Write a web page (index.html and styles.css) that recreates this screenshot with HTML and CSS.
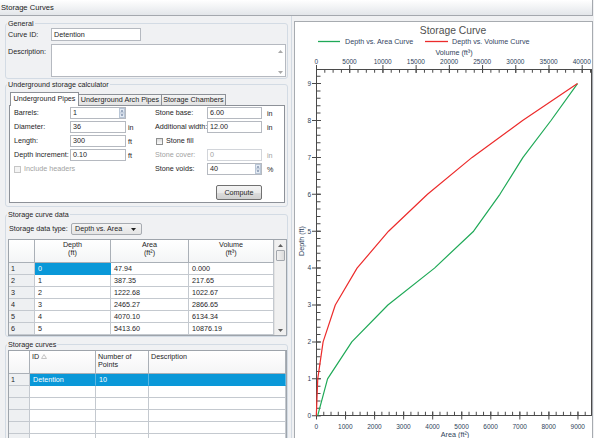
FILE: index.html
```html
<!DOCTYPE html>
<html lang="en">
<head>
<meta charset="utf-8">
<title>Storage Curves</title>
<link rel="stylesheet" href="styles.css">
</head>
<body>
<div class="titlebar">Storage Curves</div>
<div class="main">
  <div class="left">
    <fieldset class="group general">
      <legend>General</legend>
      <div class="frow">
        <span class="flabel">Curve ID:</span>
        <div class="inp curve-id">Detention</div>
      </div>
      <div class="frow desc">
        <span class="flabel">Description:</span>
        <div class="textarea">
          <div class="ta-scroll">
            <svg width="5" height="3" viewBox="0 0 5 3"><path d="M0 3L2.5 0L5 3Z" fill="#a9a9a9"/></svg>
            <svg width="5" height="3" viewBox="0 0 5 3"><path d="M0 0L2.5 3L5 0Z" fill="#a9a9a9"/></svg>
          </div>
        </div>
      </div>
    </fieldset>

    <fieldset class="group calc">
      <legend>Underground storage calculator</legend>
      <div class="tabs">
        <div class="tab active t1">Underground Pipes</div>
        <div class="tab t2">Underground Arch Pipes</div>
        <div class="tab t3">Storage Chambers</div>
      </div>
      <div class="tabpage">
        <div class="form">
          <span class="fl">Barrels:</span>
          <div class="inp spin"><span>1</span><svg class="sp" width="6" height="10" viewBox="0 0 6 10"><rect x="0.5" y="0.5" width="5" height="4.5" fill="#e4ebf4" stroke="#b9c6d6"/><rect x="0.5" y="5" width="5" height="4.5" fill="#e4ebf4" stroke="#b9c6d6"/><path d="M1.6 3.6L3 2L4.4 3.6Z" fill="#4f6688"/><path d="M1.6 6.4L3 8L4.4 6.4Z" fill="#4f6688"/></svg></div>
          <span></span>
          <span class="fl">Stone base:</span>
          <div class="inp">6.00</div>
          <span class="u2">in</span>

          <span class="fl">Diameter:</span>
          <div class="inp">36</div>
          <span class="u1">in</span>
          <span class="fl">Additional width:</span>
          <div class="inp">12.00</div>
          <span class="u2">in</span>

          <span class="fl">Length:</span>
          <div class="inp">300</div>
          <span class="u1">ft</span>
          <span class="chkline span2 right"><span class="chk"></span>Stone fill</span>
          <span></span>

          <span class="fl">Depth increment:</span>
          <div class="inp">0.10</div>
          <span class="u1">ft</span>
          <span class="fl dis">Stone cover:</span>
          <div class="inp disabled">0</div>
          <span class="u2 dis">in</span>

          <span class="chkline span3 dis"><span class="chk chk-dis"></span>Include headers</span>
          <span class="fl">Stone voids:</span>
          <div class="inp spin"><span>40</span><svg class="sp" width="6" height="10" viewBox="0 0 6 10"><rect x="0.5" y="0.5" width="5" height="4.5" fill="#e4ebf4" stroke="#b9c6d6"/><rect x="0.5" y="5" width="5" height="4.5" fill="#e4ebf4" stroke="#b9c6d6"/><path d="M1.6 3.6L3 2L4.4 3.6Z" fill="#4f6688"/><path d="M1.6 6.4L3 8L4.4 6.4Z" fill="#4f6688"/></svg></div>
          <span class="u2">%</span>
        </div>
        <div class="btn-row"><div class="btn">Compute</div></div>
      </div>
    </fieldset>

    <fieldset class="group data">
      <legend>Storage curve data</legend>
      <div class="combo-row">
        <span class="clabel">Storage data type:</span>
        <div class="combo"><span>Depth vs. Area</span><svg width="5" height="3" viewBox="0 0 5 3"><path d="M0 0L2.5 3L5 0Z" fill="#1e1e1e"/></svg></div>
      </div>
      <div class="datagrid">
        <div class="gtable">
          <div class="ghead dcols">
            <div class="cell rh"></div>
            <div class="cell hc">Depth<br>(ft)</div>
            <div class="cell hc">Area<br>(ft²)</div>
            <div class="cell hc">Volume<br>(ft³)</div>
          </div>
          <div class="grow dcols"><div class="cell rh">1</div><div class="cell sel">0</div><div class="cell">47.94</div><div class="cell">0.000</div></div>
          <div class="grow dcols"><div class="cell rh">2</div><div class="cell">1</div><div class="cell">387.35</div><div class="cell">217.65</div></div>
          <div class="grow dcols"><div class="cell rh">3</div><div class="cell">2</div><div class="cell">1222.68</div><div class="cell">1022.67</div></div>
          <div class="grow dcols"><div class="cell rh">4</div><div class="cell">3</div><div class="cell">2465.27</div><div class="cell">2866.65</div></div>
          <div class="grow dcols"><div class="cell rh">5</div><div class="cell">4</div><div class="cell">4070.10</div><div class="cell">6134.34</div></div>
          <div class="grow dcols"><div class="cell rh">6</div><div class="cell">5</div><div class="cell">5413.60</div><div class="cell">10876.19</div></div>
        </div>
        <div class="vbar">
          <div class="varr"><svg width="5" height="3" viewBox="0 0 5 3"><path d="M0 3L2.5 0L5 3Z" fill="#606060"/></svg></div>
          <div class="thumb"></div>
          <div class="vspace"></div>
          <div class="varr"><svg width="5" height="3" viewBox="0 0 5 3"><path d="M0 0L2.5 3L5 0Z" fill="#606060"/></svg></div>
        </div>
      </div>
    </fieldset>

    <fieldset class="group curves">
      <legend>Storage curves</legend>
      <div class="cgrid">
        <div class="ghead ccols">
          <div class="cell rh"></div>
          <div class="cell hl">ID <svg width="6" height="5" viewBox="0 0 6 5"><path d="M0.5 4.5L3 0.5L5.5 4.5Z" fill="none" stroke="#c4c4c4"/></svg></div>
          <div class="cell hl">Number of<br>Points</div>
          <div class="cell hl">Description</div>
        </div>
        <div class="grow ccols selrow"><div class="cell rh">1</div><div class="cell">Detention</div><div class="cell">10</div><div class="cell"></div></div>
        <div class="grow ccols"><div class="cell rh"></div><div class="cell"></div><div class="cell"></div><div class="cell"></div></div>
        <div class="grow ccols"><div class="cell rh"></div><div class="cell"></div><div class="cell"></div><div class="cell"></div></div>
        <div class="grow ccols"><div class="cell rh"></div><div class="cell"></div><div class="cell"></div><div class="cell"></div></div>
        <div class="grow ccols"><div class="cell rh"></div><div class="cell"></div><div class="cell"></div><div class="cell"></div></div>
        <div class="grow ccols"><div class="cell rh"></div><div class="cell"></div><div class="cell"></div><div class="cell"></div></div>
      </div>
    </fieldset>
  </div>

  <div class="chart">
    <svg class="plot" width="297" height="416" viewBox="295 22 297 416">
      <text class="ct-title" x="453" y="33.5">Storage Curve</text>
      <line x1="318" y1="41.5" x2="340" y2="41.5" stroke="#1fa957" stroke-width="1.3"/>
      <text class="ct-leg" x="345" y="44">Depth vs. Area Curve</text>
      <line x1="425" y1="41.5" x2="448" y2="41.5" stroke="#ec2b2b" stroke-width="1.3"/>
      <text class="ct-leg" x="452" y="44">Depth vs. Volume Curve</text>
      <text class="ct-axt" x="454" y="55">Volume (ft³)</text>

      <g class="ct-tick">
        <text x="316.3" y="64">0</text>
        <text x="349.5" y="64">5000</text>
        <text x="382.7" y="64">10000</text>
        <text x="415.9" y="64">15000</text>
        <text x="449.1" y="64">20000</text>
        <text x="482.2" y="64">25000</text>
        <text x="515.4" y="64">30000</text>
        <text x="548.6" y="64">35000</text>
        <text x="581.8" y="64">40000</text>
      </g>
      <g class="ct-tick">
        <text x="316.3" y="428.5">0</text>
        <text x="345.35" y="428.5">1000</text>
        <text x="374.4" y="428.5">2000</text>
        <text x="403.45" y="428.5">3000</text>
        <text x="432.5" y="428.5">4000</text>
        <text x="461.55" y="428.5">5000</text>
        <text x="490.6" y="428.5">6000</text>
        <text x="519.65" y="428.5">7000</text>
        <text x="548.7" y="428.5">8000</text>
        <text x="577.75" y="428.5">9000</text>
      </g>
      <g class="ct-tick ct-y">
        <text x="311" y="418">0</text>
        <text x="311" y="381.1">1</text>
        <text x="311" y="344.2">2</text>
        <text x="311" y="307.3">3</text>
        <text x="311" y="270.4">4</text>
        <text x="311" y="233.5">5</text>
        <text x="311" y="196.6">6</text>
        <text x="311" y="159.7">7</text>
        <text x="311" y="122.8">8</text>
        <text x="311" y="85.9">9</text>
      </g>
      <text class="ct-axt" x="303.5" y="241" transform="rotate(-90 303.5 241)">Depth (ft)</text>
      <text class="ct-axt" x="455" y="436.5">Area (ft²)</text>

      <g stroke="#4a4a4a" fill="none">
        <rect x="316.5" y="69.5" width="275" height="346" stroke-width="1"/>
        <line x1="316" y1="71" x2="592" y2="71" stroke-width="3.5" stroke-dasharray="1 7.303"/>
        <line x1="316" y1="69" x2="592" y2="69" stroke-width="8" stroke-dasharray="1 32.212"/>
        <line x1="316" y1="413.5" x2="592" y2="413.5" stroke-width="3.5" stroke-dasharray="1 6.2625"/>
        <line x1="316" y1="415.5" x2="592" y2="415.5" stroke-width="8" stroke-dasharray="1 28.05"/>
        <line x1="318.5" y1="416.2" x2="318.5" y2="69" stroke-width="4" stroke-dasharray="1 6.38"/>
        <line x1="316.5" y1="416.2" x2="316.5" y2="69" stroke-width="9" stroke-dasharray="1 35.9"/>
      </g>

      <polyline fill="none" stroke="#1fa957" stroke-width="1.2" stroke-linejoin="round" points="317.7,415.7 327.55,378.8 351.8,341.9 387.9,305 434.5,268.1 473.6,231.2 499.9,194.3 523,157.4 551,120.5 577.5,83.6"/>
      <polyline fill="none" stroke="#ec2b2b" stroke-width="1.2" stroke-linejoin="round" points="316.3,415.7 317.75,378.8 323.1,341.9 335.3,305 357.05,268.1 388.55,231.2 427.5,194.3 472.1,157.4 522.6,120.5 577.5,83.6"/>
    </svg>
  </div>
</div>
</body>
</html>
```

FILE: styles.css
```css
* { box-sizing: border-box; }
html, body { margin: 0; padding: 0; }
body {
  width: 594px;
  height: 438px;
  overflow: hidden;
  background: #f0f1f3;
  font-family: "Liberation Sans", Arial, sans-serif;
  font-size: 7.2px;
  color: #1e1e1e;
}

.titlebar {
  width: 593px;
  height: 16px;
  border-bottom: 1px solid #a4a8ae;
  border-right: 1px solid #a4a8ae;
  background: linear-gradient(#ffffff, #e3e6ea);
  font-size: 7.6px;
  line-height: 15px;
  padding-left: 1px;
  color: #1a1a1a;
}

.main { display: flex; height: 422px; }

.left {
  width: 292px;
  height: 422px;
  padding: 3px 3px 0 5px;
  border-right: 1px solid #d3dae2;
  overflow: hidden;
}

/* group boxes */
fieldset.group {
  margin: 0;
  padding: 0 0 0 2px;
  width: 283px;
  min-width: 0;
  border: 1px solid #d3dbe4;
  border-radius: 3px;
}
fieldset.group legend {
  padding: 0 1px;
  margin-left: -1px;
  line-height: 9px;
  font-size: 7.2px;
}
.general { padding-bottom: 1px !important; }
.calc { margin-top: 1px !important; padding-top: 3px !important; padding-bottom: 3px !important; }
.data { margin-top: 3px !important; padding-top: 4px !important; }
.curves { margin-top: 3px !important; padding-top: 1px !important; height: 120px; }

/* general */
.frow { display: flex; }
.flabel { width: 43px; line-height: 13px; white-space: nowrap; }
.desc { margin-top: 3px; }
.desc .flabel { line-height: 9px; padding-top: 3px; }
.inp {
  height: 12px;
  background: #fff;
  border: 1px solid #b5b9c0;
  padding-left: 2px;
  line-height: 10px;
  white-space: nowrap;
}
.curve-id { width: 90px; height: 13px; line-height: 11px; }
.textarea {
  width: 235px;
  height: 33px;
  background: #fff;
  border: 1px solid #b5b9c0;
  display: flex;
  justify-content: flex-end;
}
.ta-scroll {
  width: 10px;
  display: flex;
  flex-direction: column;
  justify-content: space-between;
  align-items: center;
  padding: 5px 0 2px;
}
.ta-scroll svg { display: block; }

/* tabs */
.tabs {
  display: flex;
  align-items: flex-end;
  height: 13px;
  margin-left: 2px;
}
.tab {
  height: 11px;
  border: 1px solid #8d9198;
  border-bottom: none;
  margin-right: -1px;
  background: linear-gradient(#f5f5f5, #e2e2e2);
  text-align: center;
  line-height: 10px;
  white-space: nowrap;
}
.tab.active {
  height: 14px;
  margin-bottom: -1px;
  background: #fff;
  position: relative;
  z-index: 1;
  line-height: 12px;
}
.t1 { width: 69px; }
.t2 { width: 84px; }
.t3 { width: 65px; }

.tabpage {
  margin-left: 1px;
  width: 276px;
  height: 98px;
  background: #fff;
  border: 1px solid #8d9198;
  padding: 1px 0 0 4px;
}
.form {
  display: grid;
  grid-template-columns: 56px 56px 29px 52px 55px 18px;
  grid-auto-rows: 12px;
  row-gap: 2px;
  align-items: center;
}
.fl { white-space: nowrap; line-height: 12px; }
.u1 { padding-left: 2px; }
.u2 { padding-left: 5px; }
.dis { color: #a2a2a2; }
.inp.disabled { border-color: #d2d5da; color: #a2a2a2; }
.spin { display: flex; justify-content: space-between; padding-right: 0; }
.spin .sp { display: block; }
.span2 { grid-column: span 2; }
.span3 { grid-column: span 3; }
.chkline { display: flex; align-items: center; white-space: nowrap; line-height: 12px; }
.chkline.right { padding-left: 1px; }
.chk {
  width: 7px;
  height: 7px;
  border: 1px solid #8e8f8f;
  background: linear-gradient(#dcdcdc, #fbfbfb);
  margin-right: 3px;
}
.chk-dis { border-color: #c6c6c6; background: #f4f4f4; }
.btn-row { margin-top: 10px; padding-left: 202px; }
.btn {
  width: 46px;
  height: 15px;
  border: 1px solid #707070;
  border-radius: 2px;
  background: linear-gradient(#f3f3f3 0%, #ebebeb 50%, #dddddd 51%, #cfcfcf 100%);
  text-align: center;
  line-height: 13px;
}

/* combo */
.combo-row { display: flex; height: 12px; padding-left: 1px; }
.clabel { width: 62px; line-height: 12px; white-space: nowrap; }
.combo {
  width: 71px;
  height: 12px;
  border: 1px solid #a7abb1;
  border-radius: 2px;
  background: linear-gradient(#f4f4f4, #e4e4e4);
  display: flex;
  align-items: center;
  justify-content: space-between;
  padding: 0 5px 0 3px;
  line-height: 10px;
}
.combo svg { display: block; }

/* grids */
.datagrid {
  margin-top: 4px;
  width: 279px;
  height: 97px;
  border: 1px solid #9ea4ab;
  background: #fff;
  display: flex;
}
.gtable { width: 265px; }
.dcols { display: grid; grid-template-columns: 26px 76px 78px 85px; }
.ccols { display: grid; grid-template-columns: 21px 66px 53px 137px; }
.ghead { height: 23px; }
.grow { height: 12px; }
.cell {
  border-right: 1px solid #c4c9cf;
  border-bottom: 1px solid #c4c9cf;
  padding-left: 3px;
  line-height: 11px;
  white-space: nowrap;
  overflow: hidden;
}
.ghead .cell {
  background: linear-gradient(#ffffff, #f4f5f6);
  border-right-color: #aab0b7;
  border-bottom-color: #aab0b7;
}
.cell.hc { text-align: center; padding: 1px 0 0; line-height: 8px; }
.cell.hl { padding: 2px 0 0 2px; line-height: 8px; }
.cell.hl svg { vertical-align: top; margin-top: 1px; }
.cell.rh { background: #eef0f2; padding-left: 2px; }
.ghead .cell.rh { background: linear-gradient(#ffffff, #f4f5f6); }
.cell.sel { background: #0a98d8; color: #fff; border-color: #0a98d8; }
.selrow .cell:not(.rh) { background: #0a98d8; color: #fff; border-right-color: #5ab7e3; border-bottom-color: #0a98d8; }

.vbar {
  width: 12px;
  background: #f0f0f0;
  border-left: 1px solid #e2e2e2;
  display: flex;
  flex-direction: column;
  align-items: center;
}
.varr { height: 10px; display: flex; align-items: center; justify-content: center; }
.varr svg { display: block; }
.thumb {
  width: 9px;
  height: 11px;
  border: 1px solid #a3a7ad;
  border-radius: 1px;
  background: linear-gradient(90deg, #f2f2f2, #dcdcdc);
}
.vspace { flex: 1; }

.cgrid {
  width: 279px;
  height: 120px;
  border: 1px solid #9ea4ab;
  background: #fff;
}

/* chart */
.chart {
  width: 299px;
  height: 420px;
  margin-left: 2px;
  margin-top: 5px;
  border: 1px solid #a7abb0;
  background: #fff;
}
.plot { display: block; }
.plot text { font-family: "Liberation Sans", Arial, sans-serif; }
.ct-title { font-size: 10.3px; fill: #4f4f4f; text-anchor: middle; }
.ct-leg { font-size: 7.2px; fill: #34465f; }
.ct-axt { font-size: 7.2px; fill: #2e3f5a; text-anchor: middle; }
.ct-tick text { font-size: 6.5px; fill: #2e3f5a; text-anchor: middle; }
.ct-y text { text-anchor: end; }
```
